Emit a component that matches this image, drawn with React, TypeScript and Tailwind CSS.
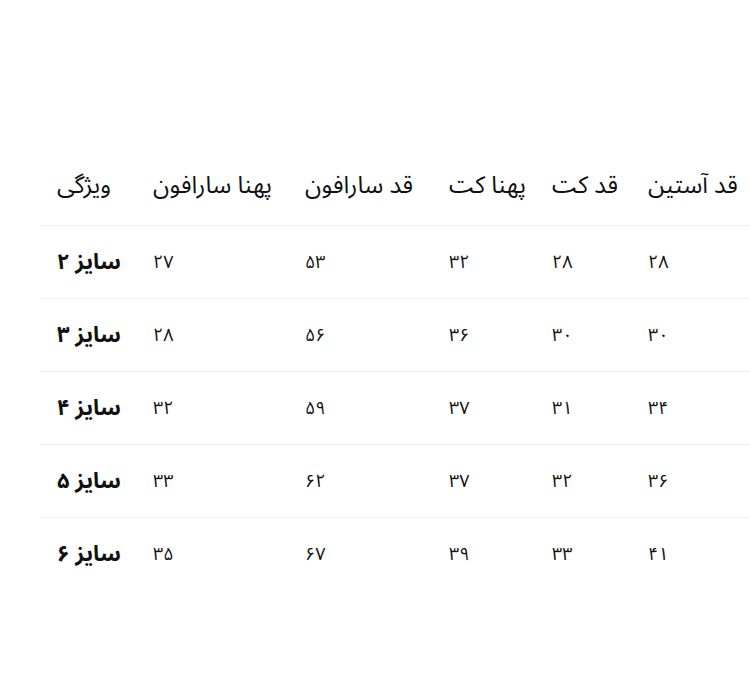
const headers = ["ویژگی", "پهنا سارافون", "قد سارافون", "پهنا کت", "قد کت", "قد آستین"];

const rows = [
  ["سایز ۲", "۲۷", "۵۳", "۳۲", "۲۸", "۲۸"],
  ["سایز ۳", "۲۸", "۵۶", "۳۶", "۳۰", "۳۰"],
  ["سایز ۴", "۳۲", "۵۹", "۳۷", "۳۱", "۳۴"],
  ["سایز ۵", "۳۳", "۶۲", "۳۷", "۳۲", "۳۶"],
  ["سایز ۶", "۳۵", "۶۷", "۳۹", "۳۳", "۴۱"],
];

const cols = "grid grid-cols-[96px_152px_144px_103px_96px_1fr]";

export default function App() {
  return (
    <div
      className="w-[750px] h-[697px] bg-white overflow-hidden text-[#111]"
      style={{ fontFamily: '"Noto Sans Arabic", "DejaVu Sans", sans-serif' }}
    >
      <div className="pt-[146px] pl-[40px]">
        <div className={`${cols} h-[80px] items-center border-b border-[#efefef]`}>
          {headers.map((h) => (
            <div key={h} className="pl-[17px] text-left text-[24px] whitespace-nowrap">
              <span dir="rtl">{h}</span>
            </div>
          ))}
        </div>
        {rows.map((row, i) => (
          <div
            key={i}
            className={`${cols} h-[73px] items-center ${i < rows.length - 1 ? "border-b border-[#f3f3f3]" : ""}`}
          >
            {row.map((c, j) => (
              <div
                key={j}
                className={`pl-[17px] text-left whitespace-nowrap ${j === 0 ? "text-[22px] font-bold" : "text-[18px]"}`}
              >
                <span dir="rtl">{c}</span>
              </div>
            ))}
          </div>
        ))}
      </div>
    </div>
  );
}
